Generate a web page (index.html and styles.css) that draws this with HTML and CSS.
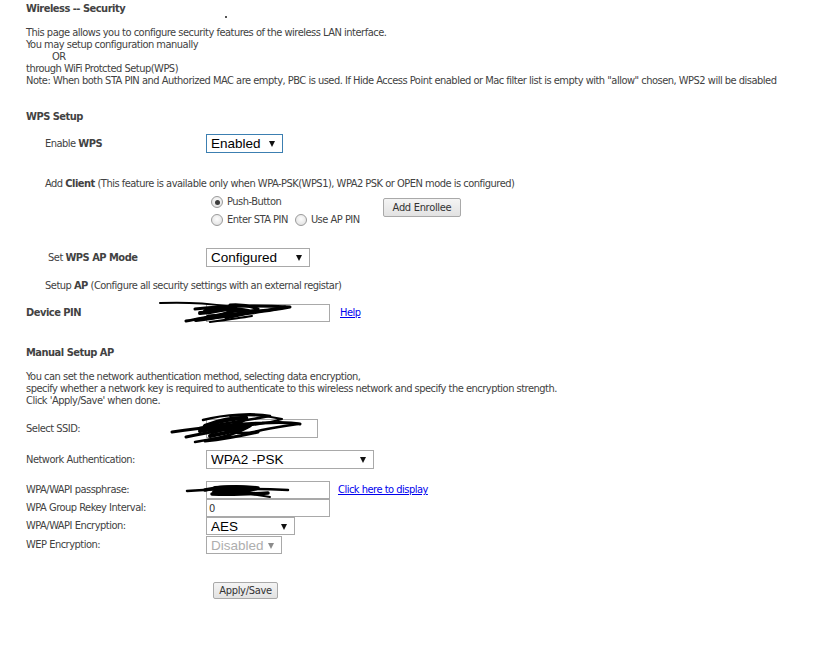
FILE: index.html
```html
<!DOCTYPE html>
<html>
<head>
<meta charset="utf-8">
<link rel="stylesheet" href="styles.css">
</head>
<body>
<div class="page">
  <div class="title">Wireless -- Security</div>
  <div class="dotline"><span class="dot"></span></div>
  <div class="intro">
    <div>This page allows you to configure security features of the wireless LAN interface.</div>
    <div>You may setup configuration manually</div>
    <div class="or">OR</div>
    <div>through WiFi Protcted Setup(WPS)</div>
    <div>Note: When both STA PIN and Authorized MAC are empty, PBC is used. If Hide Access Point enabled or Mac filter list is empty with "allow" chosen, WPS2 will be disabled</div>
  </div>

  <div class="section-title wps-title">WPS Setup</div>

  <div class="row row-enable">
    <div class="label indent">Enable <b>WPS</b></div>
    <div class="sel sel-focus w-enabled"><select><option>Enabled</option></select></div>
  </div>

  <div class="line indent addclient">Add <b>Client</b> (This feature is available only when WPA-PSK(WPS1), WPA2 PSK or OPEN mode is configured)</div>

  <div class="row row-radios">
    <div class="label"></div>
    <div class="radios">
      <label class="radio-line"><input type="radio" name="m" checked><span>Push-Button</span></label>
      <div class="radio-line">
        <label class="radio-item"><input type="radio" name="m"><span>Enter STA PIN</span></label>
        <label class="radio-item"><input type="radio" name="m"><span>Use AP PIN</span></label>
      </div>
    </div>
    <button class="btn btn-enrollee">Add Enrollee</button>
  </div>

  <div class="row row-apmode">
    <div class="label indent2">Set <b>WPS AP Mode</b></div>
    <div class="sel w-configured"><select><option>Configured</option></select></div>
  </div>

  <div class="line indent setupap">Setup <b>AP</b> (Configure all security settings with an external registar)</div>

  <div class="row row-pin">
    <div class="label"><b>Device PIN</b></div>
    <input class="txt w-pin" type="text" value="">
    <a class="link help" href="#">Help</a>
  </div>

  <div class="section-title manual-title">Manual Setup AP</div>

  <div class="intro manual-intro">
    <div>You can set the network authentication method, selecting data encryption,</div>
    <div>specify whether a network key is required to authenticate to this wireless network and specify the encryption strength.</div>
    <div>Click 'Apply/Save' when done.</div>
  </div>

  <div class="row row-ssid">
    <div class="label">Select SSID:</div>
    <div class="ssidbox"></div>
  </div>

  <div class="row row-auth">
    <div class="label">Network Authentication:</div>
    <div class="sel w-auth"><select><option>WPA2 -PSK</option></select></div>
  </div>

  <div class="row row-pass">
    <div class="label">WPA/WAPI passphrase:</div>
    <input class="txt w-pin" type="text" value="">
    <a class="link display" href="#">Click here to display</a>
  </div>
  <div class="row row-rekey">
    <div class="label">WPA Group Rekey Interval:</div>
    <input class="txt w-pin" type="text" value="0">
  </div>
  <div class="row row-enc">
    <div class="label">WPA/WAPI Encryption:</div>
    <div class="sel w-aes"><select><option>AES</option></select></div>
  </div>
  <div class="row row-wep">
    <div class="label">WEP Encryption:</div>
    <div class="sel sel-disabled w-wep"><select disabled><option>Disabled</option></select></div>
  </div>

  <div class="actions">
    <button class="btn btn-apply">Apply/Save</button>
  </div>
</div>

<svg class="scribbles" width="834" height="654" viewBox="0 0 834 654" xmlns="http://www.w3.org/2000/svg">
  <g fill="none" stroke="#000" stroke-linecap="round" stroke-linejoin="round">
    <!-- Device PIN -->
    <path d="M160 303 C185 302 205 303 226 306" stroke-width="2"/>
    <path d="M195 309 C220 306 250 305 290 307 C268 311 240 314 208 316 C230 317 252 313 272 310" stroke-width="3"/>
    <path d="M186 321 C205 318 222 314 240 310 C250 312 262 312 285 307" stroke-width="3"/>
    <path d="M200 313 C215 312 228 309 236 306 C232 312 220 318 196 320" stroke-width="4"/>
    <path d="M205 311 C220 309 235 308 248 311 C238 315 222 317 206 318" stroke-width="4"/>
    <path d="M230 305 C240 304 250 306 258 309 C248 313 238 316 226 318" stroke-width="3"/>
    <path d="M210 322 C225 320 240 318 252 316" stroke-width="2"/>
    <!-- SSID -->
    <path d="M203 420 C225 414 255 413 270 416 C250 420 225 423 200 428" stroke-width="2.5"/>
    <path d="M230 416 C250 414 268 416 282 419 C270 423 255 425 238 427" stroke-width="2"/>
    <path d="M172 432 C200 428 230 424 262 423 C280 422 295 423 300 424" stroke-width="3"/>
    <path d="M186 437 C210 432 232 428 250 426 C240 432 225 437 205 441 C225 439 240 436 258 432" stroke-width="3"/>
    <path d="M205 426 C218 421 232 418 246 418 C238 424 226 429 212 432" stroke-width="4.5"/>
    <path d="M200 431 C215 428 232 426 250 425 C240 430 226 433 210 436" stroke-width="4"/>
    <path d="M226 430 C236 434 248 434 262 430 C272 428 284 426 298 424" stroke-width="2.5"/>
    <path d="M195 442 C205 440 218 438 230 436" stroke-width="2.5"/>
    <!-- passphrase -->
    <path d="M187 491 C210 489 240 488 288 490" stroke-width="2.5"/>
    <path d="M205 490 C222 486 240 486 258 488 C245 492 228 494 212 494 C232 495 250 494 268 493" stroke-width="3.5"/>
    <path d="M215 488 C228 487 242 487 252 489 C240 491 226 492 214 492" stroke-width="4"/>
    <path d="M240 492 C250 494 262 496 270 497" stroke-width="2"/>
  </g>
</svg>
</body>
</html>
```

FILE: styles.css
```css
html, body {
  margin: 0;
  padding: 0;
  background: #fff;
}

.page {
  padding: 3px 0 0 26px;
  font-family: "DejaVu Sans Condensed", "Liberation Sans", sans-serif;
  font-size: 11px;
  line-height: 12px;
  letter-spacing: -0.5px;
  color: #424242;
}

b, .title, .section-title {
  font-weight: bold;
}

.title {
  height: 12px;
}

.dotline {
  height: 12px;
  position: relative;
}

.dot {
  position: absolute;
  left: 199px;
  top: 1px;
  width: 2px;
  height: 2px;
  background: #555;
}

.intro div {
  white-space: nowrap;
}

.or {
  padding-left: 26px;
}

.wps-title {
  margin-top: 24px;
  height: 12px;
}

.row {
  display: flex;
  align-items: center;
}

.label {
  box-sizing: border-box;
  width: 180px;
  flex: none;
  white-space: nowrap;
}

.indent {
  padding-left: 19px;
}

.indent2 {
  padding-left: 22px;
}

.row-enable {
  margin-top: 11px;
  height: 19px;
}

.addclient {
  margin-top: 25px;
  height: 12px;
}

.row-radios {
  margin-top: 3px;
  align-items: flex-start;
}

.radios {
  display: flex;
  flex-direction: column;
  width: 177px;
}

.radio-line {
  display: flex;
  align-items: center;
  height: 18px;
}

.radio-item {
  display: flex;
  align-items: center;
}

input[type="radio"] {
  appearance: none;
  -webkit-appearance: none;
  width: 12px;
  height: 12px;
  margin: 0 4px 0 5px;
  border: 1px solid #9a9a9a;
  border-radius: 50%;
  background: radial-gradient(circle at 50% 40%, #fdfdfd 0%, #e6e6e6 70%, #d8d8d8 100%);
  box-sizing: border-box;
  position: relative;
  flex: none;
}

input[type="radio"]:checked::after {
  content: "";
  position: absolute;
  left: 2.5px;
  top: 2.5px;
  width: 5px;
  height: 5px;
  border-radius: 50%;
  background: #3c3c3c;
}

.radio-item span {
  margin-right: 2px;
}

.btn {
  font-family: "DejaVu Sans Condensed", "Liberation Sans", sans-serif;
  font-size: 11px;
  letter-spacing: -0.3px;
  color: #333;
  background: linear-gradient(#f4f4f4, #e2e2e2);
  border: 1px solid #a9a9a9;
  border-radius: 2px;
  padding: 0;
  box-sizing: border-box;
}

.btn-enrollee {
  width: 78px;
  height: 19px;
  margin-top: 5px;
}

.row-apmode {
  margin-top: 19px;
  height: 19px;
}

.setupap {
  margin-top: 13px;
  height: 12px;
}

.row-pin {
  margin-top: 12px;
  height: 18px;
}

.txt {
  box-sizing: border-box;
  height: 18px;
  border: 1px solid #a9a9a9;
  padding: 0 2px;
  margin: 0;
  font-family: "DejaVu Sans Condensed", "Liberation Sans", sans-serif;
  font-size: 11px;
  color: #333;
  outline: none;
}

.w-pin {
  width: 124px;
}

.link {
  color: #0000ee;
  text-decoration: underline;
}

.help {
  margin-left: 10px;
}

.display {
  margin-left: 8px;
}

.manual-title {
  margin-top: 25px;
  height: 12px;
}

.manual-intro {
  margin-top: 12px;
}

.row-ssid {
  margin-top: 12px;
  height: 19px;
}

.ssidbox {
  width: 112px;
  height: 19px;
  box-sizing: border-box;
  border: 1px solid #a9a9a9;
}

.sel {
  position: relative;
  box-sizing: border-box;
  height: 19px;
  border: 1px solid #a9a9a9;
  background: #fff;
}

.sel select {
  appearance: none;
  -webkit-appearance: none;
  border: none;
  outline: none;
  background: transparent;
  width: 100%;
  height: 100%;
  margin: 0;
  padding: 0 0 0 4px;
  font-family: "Liberation Sans", Arial, sans-serif;
  font-size: 13.5px;
  letter-spacing: 0;
  color: #000;
}

.sel::after {
  content: "";
  position: absolute;
  right: 7px;
  top: 6px;
  width: 0;
  height: 0;
  border-left: 3.5px solid transparent;
  border-right: 3.5px solid transparent;
  border-top: 6px solid #111;
  pointer-events: none;
}

.sel-focus {
  border-color: #3c7fb1;
}

.sel-disabled select {
  color: #8c8c8c;
}

.sel-disabled::after {
  border-top-color: #8c8c8c;
}

.w-enabled { width: 77px; }
.w-configured { width: 104px; }
.w-auth { width: 168px; }
.w-aes { width: 89px; }
.w-wep { width: 76px; }

.row-auth {
  margin-top: 12px;
  height: 19px;
}

.row-pass {
  margin-top: 12px;
  height: 18px;
}

.row-rekey {
  height: 18px;
}

.row-enc {
  height: 18px;
}

.row-enc .sel, .row-wep .sel {
  height: 18px;
}

.row-wep {
  margin-top: 1px;
  height: 18px;
}

.actions {
  margin-top: 28px;
  padding-left: 187px;
}

.btn-apply {
  width: 65px;
  height: 17px;
}

.scribbles {
  position: absolute;
  left: 0;
  top: 0;
  pointer-events: none;
}
```
